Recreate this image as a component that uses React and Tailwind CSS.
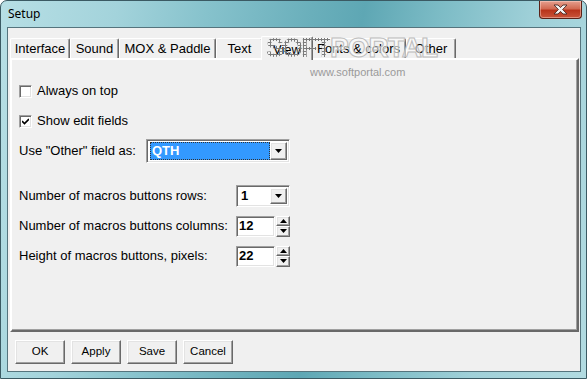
import React from 'react';

const raised =
  'border border-t-white border-l-white border-r-[#696969] border-b-[#696969] shadow-[inset_-1px_-1px_0_#a0a0a0,inset_1px_1px_0_#e3e3e3]';
const sunken =
  'border border-t-[#a0a0a0] border-l-[#a0a0a0] border-r-white border-b-white shadow-[inset_1px_1px_0_#696969,inset_-1px_-1px_0_#e3e3e3]';

const Arrow = ({ up }) => (
  <svg width="7" height="4" viewBox="0 0 7 4">
    <polygon points={up ? '3.5,0 7,4 0,4' : '0,0 7,0 3.5,4'} fill="#000" />
  </svg>
);

const Checkbox = ({ checked }) => (
  <div className={`w-[13px] h-[13px] bg-white flex items-center justify-center ${sunken}`}>
    {checked && (
      <svg width="7" height="7" viewBox="0 0 7 7">
        <path d="M0 3 L2.5 5.5 L7 1" stroke="#000" strokeWidth="1.6" fill="none" />
      </svg>
    )}
  </div>
);

const Combo = ({ width, value, selected }) => (
  <div className={`h-full bg-white flex items-stretch p-[2px] ${sunken}`} style={{ width }}>
    <div className="flex-1 flex items-center pl-[1px]">
      {selected ? (
        <div className="w-full h-full bg-[#3399ff] outline outline-1 outline-dotted outline-[#333] -outline-offset-1 text-white font-bold flex items-center pl-[2px] text-[13px]">
          {value}
        </div>
      ) : (
        <span className="font-bold text-[13px] pl-[1px]">{value}</span>
      )}
    </div>
    <div className={`w-[17px] bg-[#f0f0f0] flex items-center justify-center ${raised}`}>
      <Arrow />
    </div>
  </div>
);

const Spin = ({ value }) => (
  <div className="flex items-stretch h-full gap-[1px]">
    <div className={`w-[39px] bg-white flex items-center pl-[2px] font-bold text-[13px] ${sunken}`}>{value}</div>
    <div className="w-[14px] flex flex-col">
      <div className={`flex-1 bg-[#f0f0f0] flex items-center justify-center ${raised}`}>
        <Arrow up />
      </div>
      <div className={`flex-1 bg-[#f0f0f0] flex items-center justify-center ${raised}`}>
        <Arrow />
      </div>
    </div>
  </div>
);

const tabs = [
  { label: 'Interface', w: 'w-[60px]' },
  { label: 'Sound', w: 'w-[49px]' },
  { label: 'MOX & Paddle', w: 'w-[97px]' },
  { label: 'Text', w: 'w-[47px]' },
  { label: 'View', w: 'w-[52px]', active: true },
  { label: 'Fonts & colors', w: 'w-[95px]' },
  { label: 'Other', w: 'w-[50px]' },
];

const Tab = ({ label, w, active }) =>
  active ? (
    <div
      className={`${w} h-[24px] -mx-[2px] -mb-[2px] relative z-10 bg-[#f0f0f0] border-t border-l border-r border-t-white border-l-white border-r-[#696969] shadow-[inset_-1px_0_0_#a0a0a0] rounded-t-[2px] flex items-start justify-center pt-[3px]`}
    >
      {label}
    </div>
  ) : (
    <div
      className={`${w} h-[20px] bg-[#f0f0f0] border-t border-l border-r border-t-white border-l-white border-r-[#696969] shadow-[inset_-1px_0_0_#a0a0a0] rounded-t-[2px] flex items-center justify-center`}
    >
      {label}
    </div>
  );

const Button = ({ children }) => (
  <div className={`w-[50px] h-[24px] bg-[#f0f0f0] flex items-center justify-center text-[11.5px] ${raised}`}>
    {children}
  </div>
);

export default function App() {
  return (
    <div className="w-[587px] h-[379px] relative overflow-hidden bg-white font-['Liberation_Sans',Arial,sans-serif] text-[13px] text-black">
      <div className="w-full h-full flex flex-col rounded-t-[7px] border border-[#3b5a63] bg-[linear-gradient(100deg,#b7dfe5_0%,#a3d3db_18%,#86c2cc_32%,#6aafbb_48%,#5ea7b4_56%,#7dbcc6_68%,#9fd0d8_82%,#b2dbe1_100%)]">
        {/* title bar */}
        <div className="h-[26px] flex justify-between items-start shrink-0">
          <span className="pl-[7px] pt-[6px] text-[12px] leading-[14px] font-['Noto_Sans','Open_Sans',sans-serif] text-black">
            Setup
          </span>
          <div className="mr-[4px] w-[43px] h-[18px] rounded-b-[4px] border border-t-0 border-[#5a2218] bg-[linear-gradient(180deg,#e6a08f_0%,#d26a52_45%,#b8341b_55%,#c9553a_100%)] shadow-[inset_0_0_0_1px_rgba(255,220,210,0.45)] flex items-center justify-center">
            <svg width="15" height="11" viewBox="0 0 15 11">
              <path
                d="M1 1 H5 L7.5 3.6 L10 1 H14 L9.6 5.5 L14 10 H10 L7.5 7.4 L5 10 H1 L5.4 5.5 Z"
                fill="#f4f4f4"
                stroke="#4a2a24"
                strokeWidth="0.9"
              />
            </svg>
          </div>
        </div>

        {/* client area */}
        <div className="flex-1 ml-[6px] mr-[5px] mb-[6px] border border-[#55747d] bg-[#f0f0f0] flex flex-col pl-[2px] pr-[1px] pt-[8px] pb-[7px]">
          <div className="h-[22px] flex items-end pl-0">
            {tabs.map((t) => (
              <Tab key={t.label} {...t} />
            ))}
          </div>

          <div className="h-[274px] flex flex-col pl-[7px] pt-[16px] border-2 border-t-white border-l-white border-r-[#696969] border-b-[#696969] shadow-[inset_-1px_-1px_0_#a0a0a0]">
            <div className="h-[30px] flex items-center">
              <Checkbox />
              <span className="ml-[5px]">Always on top</span>
            </div>
            <div className="h-[30px] flex items-center">
              <Checkbox checked />
              <span className="ml-[5px]">Show edit fields</span>
            </div>
            <div className="h-[30px] flex items-center">
              <span className="w-[127px]">Use "Other" field as:</span>
              <div className="h-[24px]">
                <Combo width={144} value="QTH" selected />
              </div>
            </div>
            <div className="h-[15px]" />
            <div className="h-[30px] flex items-center">
              <span className="w-[217px]">Number of macros buttons rows:</span>
              <div className="h-[22px]">
                <Combo width={54} value="1" />
              </div>
            </div>
            <div className="h-[30px] flex items-center">
              <span className="w-[217px]">Number of macros buttons columns:</span>
              <div className="h-[21px]">
                <Spin value="12" />
              </div>
            </div>
            <div className="h-[30px] flex items-center">
              <span className="w-[217px]">Height of macros buttons, pixels:</span>
              <div className="h-[21px]">
                <Spin value="22" />
              </div>
            </div>
          </div>

          <div className="mt-[8px] flex gap-[6px] pl-[5px]">
            <Button>OK</Button>
            <Button>Apply</Button>
            <Button>Save</Button>
            <Button>Cancel</Button>
          </div>
        </div>
      </div>

      {/* watermark */}
      <div className="absolute z-20 left-[266px] top-[34px] flex items-baseline font-bold leading-none pointer-events-none select-none">
        <span className="text-[27px] tracking-[-2px] text-transparent bg-clip-text bg-[radial-gradient(circle,#7a7a7a_1px,transparent_1.2px)] bg-[length:3px_3px]">
          SOFT
        </span>
        <span className="text-[28px] tracking-[-1px] text-white/55 [-webkit-text-stroke:1px_#bcbcbc]">PORTAL</span>
      </div>
      <div className="absolute z-20 left-[310px] top-[64px] text-[11px] text-[#9a9a9a] pointer-events-none">
        www.softportal.com
      </div>
    </div>
  );
}
